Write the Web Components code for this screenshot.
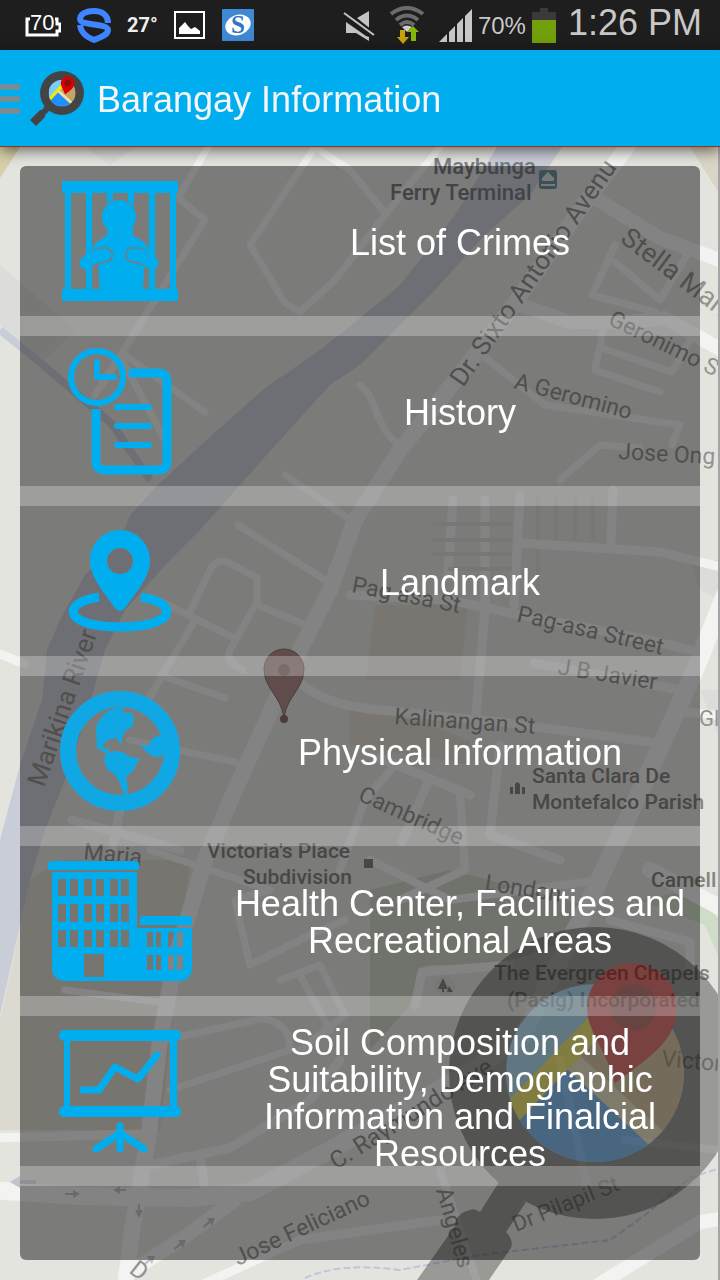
<!DOCTYPE html>
<html lang="en">
<head>
<meta charset="utf-8">
<meta name="viewport" content="width=device-width, initial-scale=1">
<title>Barangay Information</title>
<style>
  body { margin: 0; font-family: "Liberation Sans", Arial, sans-serif; }
</style>
</head>
<body>
<barangay-app></barangay-app>

<script>
const define = (name, markup) => {
  const template = document.createElement('template');
  template.innerHTML = markup;
  customElements.define(name, class extends HTMLElement {
    constructor() {
      super();
      this.attachShadow({ mode: 'open' }).append(template.content.cloneNode(true));
    }
  });
};

/* Lens of the app logo, drawn round (0,0) with an outer radius of 146. */
const lens = `
  <circle r="146" fill="#444"/>
  <clipPath id="glass"><circle r="89"/></clipPath>
  <g clip-path="url(#glass)">
    <rect x="-90" y="-90" width="180" height="180" fill="#79cdfb"/>
    <path d="M-28-4L10-40H95V95H60z" fill="#c6a468"/>
    <path d="M-28-4L-16-18L68 58L54 72z" fill="#efe0a8"/>
    <path d="M-28-4L56 74L0 95L-95 95L-78 48z" fill="#1e90ff"/>
    <path d="M-85 26L22-86V-52L-4-28L-76 48L-90 60z" fill="#fae600"/>
  </g>
  <path d="M20 10C12-22-8-42-8-65A45 45 0 0 1 82-65C82-30 48-12 20 10z" fill="#d90000"/>
  <circle cx="39" cy="-66" r="23" fill="#8f0a0a"/>`;

const road = (w, d) => `<path d="${d}" stroke-width="${w}"/>`;
const label = (x, y, angle, size, text, bold) =>
  `<text transform="translate(${x} ${y}) rotate(${angle})" font-size="${size}"${bold ? ' font-weight="500"' : ''}>${text}</text>`;

define('map-backdrop', `
  <style>
    :host { display: block; overflow: hidden; background: #e4e4df; }
    svg { display: block; width: 100%; height: 100%; }
    text { font-family: Roboto, sans-serif; }
  </style>
  <svg viewBox="0 147 720 1133" preserveAspectRatio="xMidYMid slice" aria-hidden="true">
    <path d="M0 147H20L0 178z" fill="#d6cfa8"/>
    <path d="M0 265L75 330L45 360L0 325zM85 147H135L110 165z" fill="#dcdcda"/>
    <path d="M0 1020L30 880L60 860H190L160 1130H0z" fill="#dcd9d0"/>
    <path d="M375 605H468L460 680H366zM350 705L420 722L470 740V765L350 745z" fill="#dfdbd3"/>
    <path d="M370 890L450 870L585 905L555 945L500 965H425L415 1000L370 1050z" fill="#d0d4c6"/>
    <path d="M640 900L705 925L720 960V920L690 890z" fill="#cfdcc6"/>
    <path d="M690 560H720V600L700 590zM700 690H720V740z" fill="#dcdcda"/>
    <path d="M690 147H720V195z" fill="#dbd5c6"/>

    <g fill="#c9cdd7">
      <path d="M497 147L455 215L400 285L360 318L320 350L265 388L212 435L160 483L130 515L120 540L85 575L60 620L47 650L42 700L20 765L8 810L0 840V1015L30 880L45 830L65 780L85 720L105 650L125 610L170 560L200 530L240 485L280 440L330 385L360 365L395 330L435 290L485 235L530 195L562 147z"/>
      <path d="M0 330L30 354L112 424L150 480" fill="none" stroke="#c9cdd7" stroke-width="8"/>
    </g>

    <g fill="none" stroke="#f3f3f2" stroke-linecap="round" stroke-linejoin="round">
      ${road(16, 'M627 147L580 210L510 310L440 400L400 450L355 520L330 590L285 680L235 790L205 860L175 960L160 1040L148 1140L132 1230L125 1290')}
      ${road(18, 'M-10 1190L80 1196L190 1198L250 1192L330 1150L430 1095L520 1040L590 900L650 770L695 670L725 595')}
      ${road(14, 'M125 1275L180 1240L235 1200M590 1290L700 1222L725 1218')}
      ${road(7, 'M208 147L178 198L205 220L122 353L95 395M122 353L205 412M122 360L165 440')}
      ${road(7, 'M315 147L250 245L285 303L300 312L335 280L385 215L440 147M315 147L350 170L385 213')}
      ${road(7, 'M360 385C380 400 372 425 400 446M285 475L355 523')}
      ${road(14, 'M590 195L660 238L725 262M520 305L570 322L630 322L665 318L725 352')}
      ${road(7, 'M615 245L592 295L655 312M615 262L660 300L690 250M604 325L595 370L660 392M602 348L672 372L690 340M482 355L545 405L680 425L672 445M560 480L600 445L640 448')}
      ${road(9, 'M453 500L448 575M485 500L485 610L475 725M520 495L514 605M613 490L611 542M520 543L660 552L725 568')}
      ${road(9, 'M350 595L450 600L520 615L640 638L690 650M534 663L680 690M296 680C320 700 340 705 370 709L500 722L650 742')}
      ${road(7, 'M238 525L325 580M190 612L210 570Q216 558 228 562L257 578L257 602L230 650Q225 662 243 670M258 605L305 625M162 602L232 637M195 620L148 700M160 675L225 698M130 740L235 762')}
      ${road(9, 'M380 758L470 795M428 782L402 842M500 745L490 835L560 860M685 712L725 716M72 820L180 850M120 810L112 850M-5 652L25 664')}
      ${road(8, 'M395 765L365 800L340 870M460 795L465 870L400 900M370 860L450 900L600 880')}
      ${road(7, 'M150 850L270 890L235 900L250 965L310 935L345 920M65 990L165 1003M165 1040L255 1020Q275 1015 288 1035L290 1050L170 1090M280 980L320 965L345 1015L300 1050M300 975L330 1030')}
      ${road(9, 'M-5 1138L145 1134M150 1165L230 1148L310 1100L340 1060M200 1155L205 1192M190 1290L300 1240L440 1220M415 1005L422 972L510 965M610 920L690 942L690 975')}
      ${road(16, 'M650 870L725 910')}
      ${road(8, 'M440 1170L480 1290M560 1060L590 1200M625 1140L720 1150')}
    </g>
    <g fill="none" stroke="#dcdcd8" stroke-width="4">
      <path d="M433 524H512M432 540H512M432 554H512M448 569H512M538 495V540M556 495V540M575 495V540M593 495V540M538 550V590"/>
    </g>
    <path d="M305 1278Q340 1262 400 1270L480 1255L610 1240L645 1215L690 1178L720 1168" fill="none" stroke="#bcc7dc" stroke-width="2" stroke-dasharray="7 3"/>
    <g fill="#c2c2cf">
      <path d="M10 1182L20 1176V1180H36V1184H20V1188zM80 1194l-7-4v3h-8v2h8v3zM113 1190l7-4v3h6v2h-6v3zM139 1218l-4-8h3v-6h2v6h3zM215 1218l-8 0 2 3-6 5 1 2 6-5 2 3zM186 1240l-8 0 2 3-6 5 1 2 6-5 2 3zM155 1256l-8 0 2 3-6 5 1 2 6-5 2 3z"/>
    </g>

    <g fill="#787d83">
      ${label(433, 174, 0, 22, 'Maybunga', true)}
      ${label(390, 200, 0, 22, 'Ferry Terminal', true)}
    </g>
    <rect x="539" y="170" width="18" height="19" rx="3" fill="#6b929f"/>
    <path d="M548 172l6 6v3h-12v-3zM541 184h14v2h-14z" fill="#d8e0e2"/>
    <g fill="#94938f">
      ${label(463, 388, -55, 26, 'Dr. Sixto Antonio Avenu')}
      ${label(619, 241, 37, 27, 'Stella Mari')}
      ${label(607, 324, 26, 23, 'Geronimo S')}
      ${label(513, 388, 15, 23, 'A Geromino')}
      ${label(618, 459, 3, 23, 'Jose Ong')}
      ${label(351, 592, 11, 23, 'Pag-asa St')}
      ${label(516, 621, 13, 23, 'Pag-asa Street')}
      ${label(557, 674, 9, 23, 'J B Javier')}
      ${label(394, 724, 4, 23, 'Kalinangan St')}
      ${label(699, 726, 0, 22, 'Gl')}
      ${label(357, 800, 24, 23, 'Cambridge')}
      ${label(83, 859, 6, 23, 'Maria')}
      ${label(484, 890, 9, 23, 'London')}
      ${label(661, 1066, 5, 23, 'Victor')}
      ${label(336, 1170, -32, 24, 'C. Raymundo Ave')}
      ${label(238, 1266, -25, 23, 'Jose Feliciano')}
      ${label(436, 1190, 74, 23, 'Angeles')}
      ${label(516, 1232, -22, 22, 'Dr Pilapil St')}
      ${label(128, 1272, 38, 24, 'D')}
      ${label(44, 788, -71, 26, 'Marikina River')}
    </g>
    <g fill="#85837f">
      ${label(532, 783, 0, 21, 'Santa Clara De', true)}
      ${label(532, 809, 0, 21, 'Montefalco Parish', true)}
      ${label(207, 858, 0, 21, 'Victoria\'s Place', true)}
      ${label(243, 884, 0, 21, 'Subdivision', true)}
      ${label(651, 887, 0, 21, 'Camell', true)}
      ${label(494, 980, 0, 21, 'The Evergreen Chapels', true)}
      ${label(507, 1007, 0, 21, '(Pasig) Incorporated', true)}
      <path d="M364 859h9v9h-9zM510 787h3v7h-3zM515 784l2-2 3 2v10h-5zM522 787h3v7h-3z"/>
    </g>
    <circle cx="445" cy="986" r="10" fill="#dcdcd8"/>
    <path d="M443 978l5 11h-4v3h-2v-3h-4zM449 986l4 6h-6z" fill="#85887c"/>

    <g>
      <path d="M284 717C280 695 264 688 264 669A20 20 0 0 1 304 669C304 688 288 695 284 717z" fill="#b08d8b" stroke="#8d6e6d"/>
      <circle cx="284" cy="670" r="6" fill="#826b69"/>
      <circle cx="284" cy="719" r="4" fill="#8d6e6d"/>
    </g>

    <g opacity=".47">
      <path d="M499 1182L526 1202L506 1232Q514 1240 511 1248L482 1290H410L455 1226Q456 1213 470 1210Q474 1208 480 1212z" fill="#444"/>
      <g transform="translate(595 1073)">${lens}</g>
    </g>
    <path d="M719 147V1280" stroke="#a5a5a8" stroke-width="2"/>
  </svg>`);

define('status-bar', `
  <style>
    :host { display: flex; justify-content: space-between; align-items: center; box-sizing: border-box;
            height: 50px; padding: 0 18px 0 25px; background: #1e1e1e; color: #c8c8c8; }
    div { display: flex; align-items: center; }
    svg { display: block; flex: none; }
    .left { gap: 16px; }
    .right { gap: 6px; }
    .signals { gap: 14px; }
    .badge { font: bold 20px/36px Roboto, sans-serif; color: #eee; }
    .level { font-size: 24px; line-height: 32px; padding-top: 2px; }
    .time { font-size: 36px; line-height: 40px; padding-left: 6px; padding-bottom: 4px; }
    .s { font: bold 25px "Liberation Serif", serif; }
  </style>
  <div class="left">
    <svg width="36" height="36" viewBox="0 0 36 36">
      <path d="M5 12H2V28H32V24H35V17H32V12H30" fill="none" stroke="#fff" stroke-width="3"/>
      <text x="5" y="23" font-size="22" fill="#fff">70</text>
    </svg>
    <svg width="34" height="36" viewBox="0 0 34 36" fill="none" stroke="#3d86ff" stroke-width="6">
      <path d="M31 16C31 8 25 4 17 4C9 4 3 7 3 12C3 19 31 16 31 23C31 28 24 30 17 33C9 30 4 26 3 18"/>
    </svg>
    <span class="badge">27°</span>
    <svg width="32" height="30" viewBox="0 0 32 30">
      <rect x="1" y="2" width="29" height="26" fill="none" stroke="#fff" stroke-width="2"/>
      <path d="M5 24V18L11 12L14 16L17 19L21 17L26 21V24z" fill="#fff"/>
    </svg>
    <svg width="32" height="32" viewBox="0 0 32 32">
      <rect width="32" height="32" rx="1" fill="#3f88d4"/>
      <ellipse cx="16" cy="16" rx="13" ry="10" transform="rotate(-20 16 16)" fill="#fff"/>
      <text class="s" x="9" y="24" fill="#2f75c0">S</text>
    </svg>
  </div>
  <div class="right">
    <div class="signals">
      <svg width="32" height="32" viewBox="0 0 32 32" fill="#c4c4c4">
        <path d="M3 13L23 27L26 28V32L13 24H3zM14 9L26 2V19z"/>
        <path d="M1 4L31 26" stroke="#1e1e1e" stroke-width="6"/>
        <path d="M1 4L31 26" stroke="#c4c4c4" stroke-width="2"/>
      </svg>
      <svg width="36" height="38" viewBox="0 0 36 38">
        <g fill="none" stroke="#6b6b6b" stroke-width="4">
          <path d="M2 8Q18-4 34 8M7 14Q18 5 29 14M11 19Q18 13 25 19"/>
        </g>
        <path d="M13 21Q18 18 23 21L18 26z" fill="#ccc"/>
        <path d="M11 24H16V31H20L14 38L8 31H11z" fill="#c9a20a"/>
        <path d="M22 35H27V26H30L24 20L18 26H22z" fill="#83b90b"/>
      </svg>
      <svg width="33" height="34" viewBox="0 0 33 34" fill="#c8c8c8">
        <path d="M0 34L8 26V34zM10 24L16 18V34H10zM18 16L24 10V34H18zM26 8L33 1V34H26z"/>
      </svg>
    </div>
    <span class="level">70%</span>
    <svg width="24" height="35" viewBox="0 0 24 35">
      <path d="M8 0H16V4H24V12H0V4H8z" fill="#3a3a3a"/><path d="M0 12H24V35H0z" fill="#729f0b"/>
    </svg>
    <span class="time">1:26 PM</span>
  </div>`);

define('app-header', `
  <style>
    :host { display: flex; align-items: center; box-sizing: border-box; height: 97px; position: relative;
            background: #00aeef; border-bottom: 1px solid #9c3412; box-shadow: 0 3px 14px rgba(0,0,0,.6); color: #f5f5f5; }
    button { display: flex; align-items: center; gap: 10px; padding: 0; border: 0; background: none; }
    svg { display: block; }
    h1 { margin: 0 0 0 12px; font-size: 36px; line-height: 44px; font-weight: 400; padding-top: 4px; }
  </style>
  <button aria-label="Open navigation">
    <svg width="20" height="34" viewBox="0 0 20 34"><path d="M0 6H20M0 18H20M0 30H20" stroke="#878787" stroke-width="5"/></svg>
    <svg width="55" height="56" viewBox="0 0 55 56">
      <path d="M16 34L21 39L15 45V47L6 56L0 50L10 40H12z" fill="#444"/>
      <g transform="translate(32 23) scale(.15)">${lens}</g>
    </svg>
  </button>
  <h1><slot></slot></h1>`);

const icons = {
  crimes: `
    <path d="M42 15H158V27H42zM42 123H158V135H42z"/>
    <path d="M45 27H51V123H45zM66 27H72V123H66zM87 27H93V45H87zM108 27H114V45H108zM129 27H135V123H129zM150 27H156V123H150z"/>
    <circle cx="99" cy="51" r="18" fill="#7b7a76"/>
    <circle cx="99" cy="51" r="17"/>
    <path d="M87 64L99 69L113 62V70Q126 74 134 91L124 102L123 124H80L78 98L66 90Q76 74 87 70z"/>
    <g fill="none" stroke-linecap="round" stroke-linejoin="round">
      <path d="M76 91Q80 89 85 89M122 91Q118 89 113 89" stroke="#7b7a76" stroke-width="16"/>
      <path d="M66 97Q74 89 85 89M132 97Q124 89 113 89" stroke="#00aeef" stroke-width="13"/>
    </g>`,
  history: `
    <g fill="none" stroke="#00aeef" stroke-linecap="round" stroke-linejoin="round">
      <circle cx="77" cy="41" r="26" stroke-width="6"/>
      <path d="M77 26V41H94M97 71H129M97 90H129M97 109H129" stroke-width="6"/>
      <path d="M109 37H138Q147 37 147 46V125Q147 134 138 134H85Q76 134 76 125V73" stroke-width="9" stroke-linecap="butt"/>
    </g>`,
  landmark: `
    <path fill-rule="evenodd" d="M100 24C83 24 70 38 70 55C70 72 87 90 95 102Q100 108 105 102C113 90 130 72 130 55C130 38 117 24 100 24zM100 42A13 13 0 1 1 100 68A13 13 0 1 1 100 42z"/>
    <path d="M79 91C40 97 44 121 100 121C156 121 160 97 121 91" fill="none" stroke="#00aeef" stroke-width="9"/>`,
  globe: `
    <g fill="#0fa8e4">
      <circle cx="100" cy="75" r="52" fill="none" stroke="#0fa8e4" stroke-width="16"/>
      <path d="M90 34Q97 31 105 31L102 35L105 37L112 37L114 43L112 51L106 54L103 59L101 69L97 62L88 64L83 69L84 73L89 71L88 78L77 72L76 51Q80 40 90 34z"/>
      <path d="M86 77L95 75L103 76L108 80L120 83L116 89L113 95L106 101L108 111L107 118L104 119L100 107L95 99L87 93L84 84z"/>
      <path d="M120 68L128 70L133 62L142 58L148 74L140 81L135 81L127 77z"/>
    </g>`,
  building: `
    <path d="M28 24V19Q28 15 32 15H115Q119 15 119 19V24zM120 79V74Q120 70 124 70H168Q172 70 172 74V79z"/>
    <path fill-rule="evenodd" d="M32 26H117V82H172V121Q172 135 158 135H46Q32 135 32 121z
      M38 33h8v17h-8zM50 33h8v17h-8zM64 33h8v17h-8zM76 33h8v17h-8zM90 33h8v17h-8zM101 33h8v17h-8z
      M38 58h8v18h-8zM50 58h8v18h-8zM64 58h8v18h-8zM76 58h8v18h-8zM90 58h8v18h-8zM101 58h8v18h-8z
      M38 84h8v17h-8zM50 84h8v17h-8zM64 84h8v17h-8zM76 84h8v17h-8zM90 84h8v17h-8zM101 84h8v17h-8z
      M64 108h20v23h-20z
      M127 86h6v15h-6zM136 86h5v15h-5zM148 86h6v15h-6zM157 86h6v15h-6z
      M127 109h6v15h-6zM136 109h5v15h-5zM148 109h6v15h-6zM157 109h6v15h-6z"/>`,
  board: `
    <rect x="39" y="14" width="122" height="11" rx="5"/>
    <rect x="39" y="90" width="122" height="11" rx="5"/>
    <path d="M44 20H50V95H44zM150 20H157V95H150z"/>
    <g fill="none" stroke="#00aeef" stroke-width="7" stroke-linecap="round" stroke-linejoin="round">
      <path d="M63 74H79L95 51L118 63L137 39"/>
      <path d="M100 110V133M76 133L100 117L124 133"/>
    </g>`
};

customElements.define('menu-row', class extends HTMLElement {
  constructor() {
    super();
    this.attachShadow({ mode: 'open' }).innerHTML = `
      <style>
        :host { display: block; border-bottom: 20px solid rgba(255,255,255,.26); }
        button { display: flex; align-items: safe center; width: 100%; height: 150px; padding: 0; border: 0;
                 background: none; color: #fff; font: inherit; font-size: 36px; line-height: 37px; text-align: center; cursor: pointer; }
        svg { flex: none; width: 200px; height: 150px; }
        span { flex: 1; min-width: 0; padding: 8px 12px 6px; }
      </style>
      <button>
        <svg viewBox="0 0 200 150" fill="#00aeef" aria-hidden="true">${icons[this.getAttribute('icon')]}</svg>
        <span><slot></slot></span>
      </button>`;
  }
});

define('menu-panel', `
  <style>
    :host { display: block; border-radius: 6px; overflow: hidden; background: rgba(0,0,0,.46); }
  </style>
  <slot></slot>`);

define('barangay-app', `
  <style>
    :host { display: flex; flex-direction: column; min-height: 100vh; }
    app-header { z-index: 1; }
    main { flex: 1; display: flex; flex-direction: column; position: relative; padding: 19px 20px 20px; }
    map-backdrop { position: absolute; inset: 0; }
    menu-panel { flex: 1; position: relative; }
  </style>
  <status-bar></status-bar>
  <app-header>Barangay Information</app-header>
  <main>
    <map-backdrop></map-backdrop>
    <menu-panel>
      <menu-row icon="crimes">List of Crimes</menu-row>
      <menu-row icon="history">History</menu-row>
      <menu-row icon="landmark">Landmark</menu-row>
      <menu-row icon="globe">Physical Information</menu-row>
      <menu-row icon="building">Health Center, Facilities and Recreational Areas</menu-row>
      <menu-row icon="board">Soil Composition and Suitability, Demographic Information and Finalcial Resources</menu-row>
    </menu-panel>
  </main>`);
</script>
</body>
</html>
